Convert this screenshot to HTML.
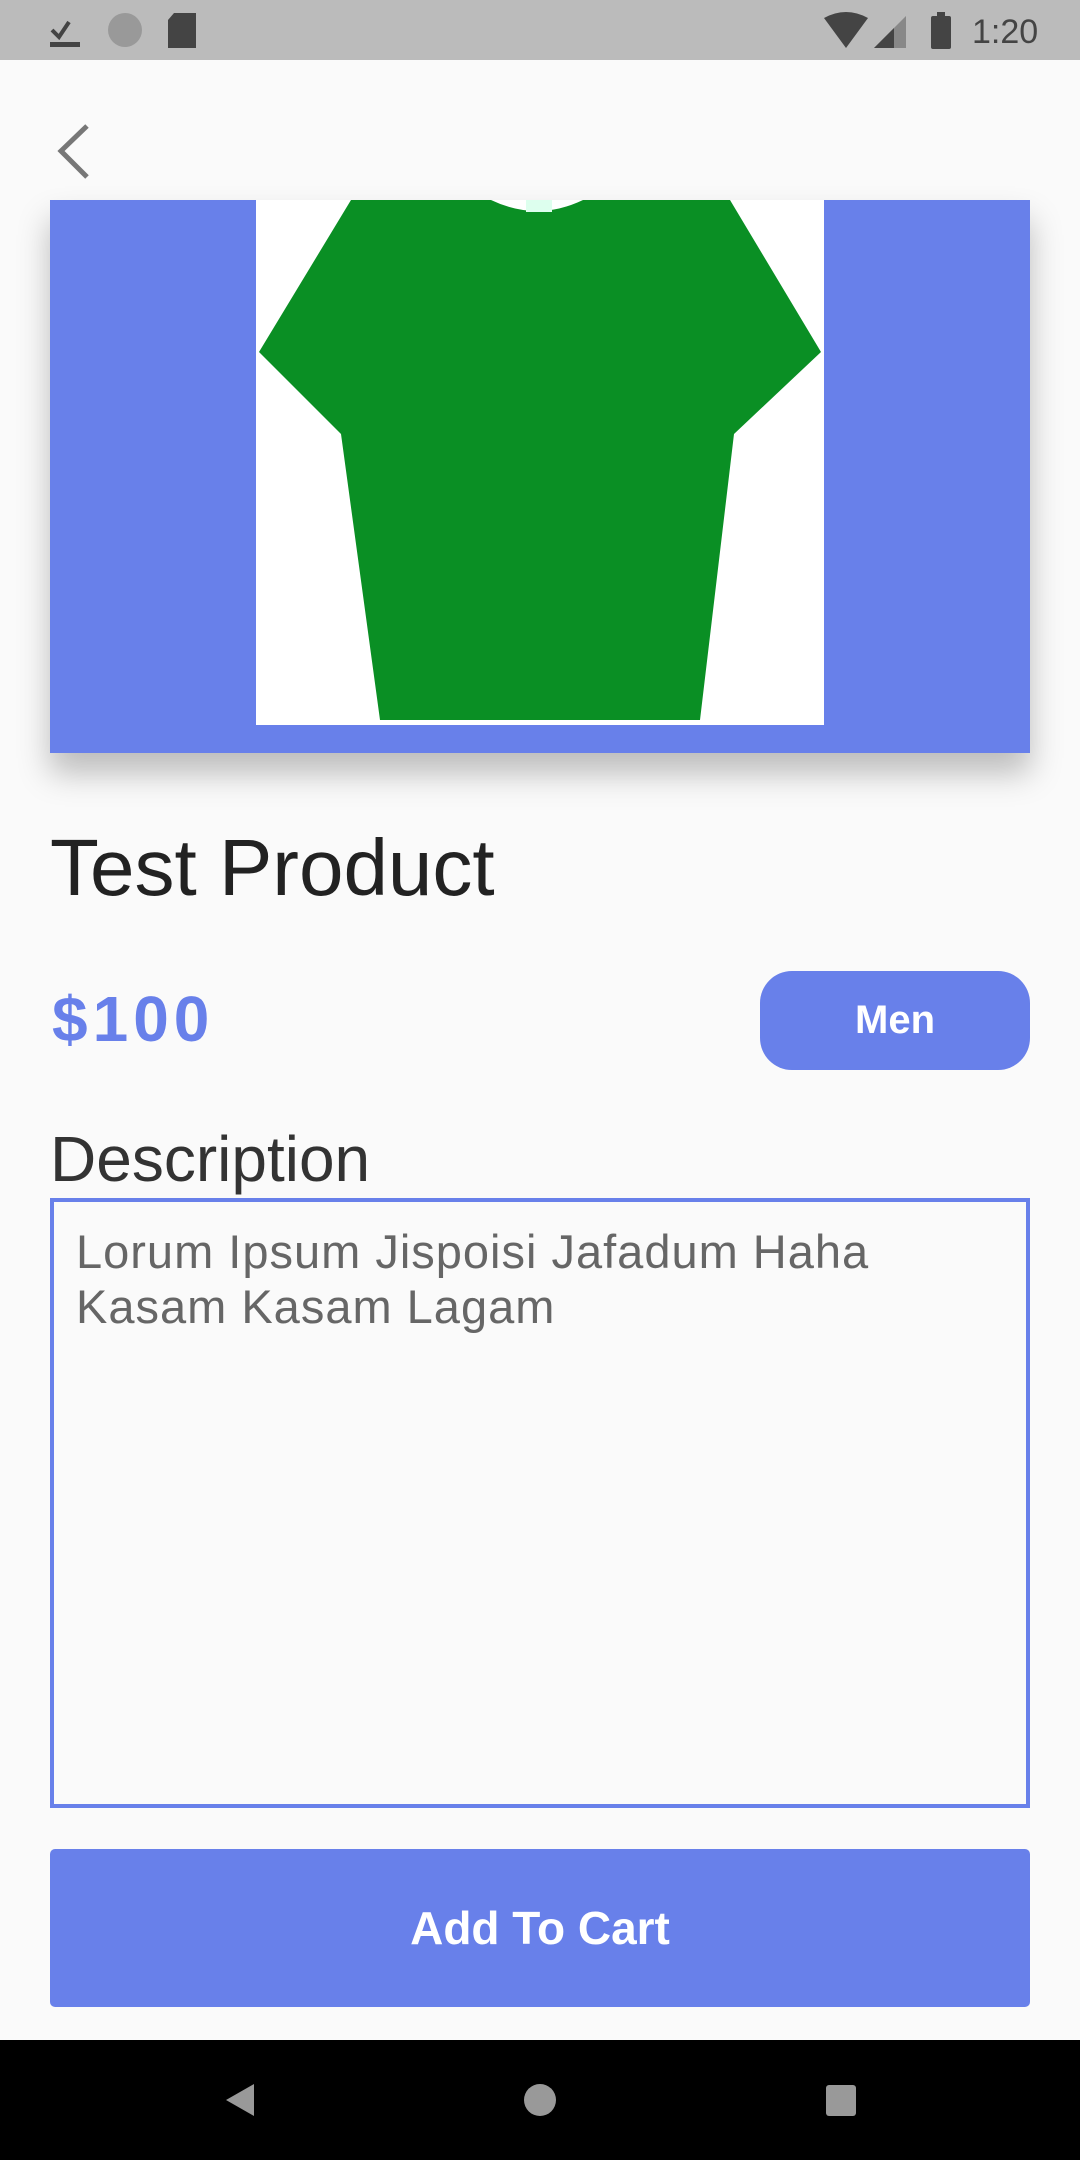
<!DOCTYPE html>
<html><head><meta charset="utf-8"><style>
*{margin:0;padding:0;box-sizing:border-box}
body{width:1080px;height:2160px;background:#fafafa;position:relative;overflow:hidden;font-family:"Liberation Sans",Roboto,sans-serif}
.abs{position:absolute}
</style></head><body>
<div class="abs" style="left:0;top:0;width:1080px;height:60px;background:#bbbbbb"></div>
<svg class="abs" style="left:0;top:0" width="1080" height="60">
<path d="M52 30l7 7 10-15" stroke="#444" stroke-width="4" fill="none"/><rect x="50" y="42" width="30" height="5" fill="#444"/>
<circle cx="125" cy="30" r="17" fill="#999"/>
<path d="M174 13h22v35h-28v-28z" fill="#444"/>
<path d="M824 18q22-12 44 0l-22 30z" fill="#444"/>
<path d="M874 48l32-32v32z" fill="#888"/><path d="M874 48l20-20v20z" fill="#444"/>
<rect x="931" y="16" width="20" height="33" rx="2" fill="#444"/><rect x="937" y="12" width="8" height="5" fill="#444"/>
<text x="972" y="43" font-size="34" fill="#444" font-family="Liberation Sans">1:20</text>
</svg>
<svg class="abs" style="left:0;top:60px" width="120" height="140"><path d="M87 66L61 91l26 26" stroke="#777" stroke-width="5" fill="none"/></svg>
<div class="abs" style="left:50px;top:200px;width:980px;height:553px;background:#6880ea;box-shadow:0 20px 30px rgba(0,0,0,0.25)"></div>
<div class="abs" style="left:256px;top:200px;width:568px;height:525px;background:#fff"></div>
<svg class="abs" style="left:256px;top:200px" width="568" height="525">
<path d="M95 0H235Q281 22 327 0H474L565 152L478 234L444 520H124L85 234L3 152Z" fill="#0a8f24"/>
<rect x="270" y="0" width="26" height="12" fill="#dfe"/>
</svg>
<div class="abs" style="left:50px;top:822px;font-size:80px;color:#222">Test Product</div>
<div class="abs" style="left:52px;top:982px;font-size:64px;font-weight:bold;color:#6880ea;letter-spacing:5px">$100</div>
<div class="abs" style="left:760px;top:971px;width:270px;height:99px;border-radius:32px;background:#6880ea;color:#fff;font-weight:bold;font-size:40px;text-align:center;line-height:99px">Men</div>
<div class="abs" style="left:50px;top:1122px;font-size:64px;color:#333">Description</div>
<div class="abs" style="left:50px;top:1198px;width:980px;height:610px;border:4px solid #6880ea;padding:22px 0 0 22px;font-size:47px;line-height:55px;letter-spacing:1px;color:#666">Lorum Ipsum Jispoisi Jafadum Haha<br>Kasam Kasam Lagam</div>
<div class="abs" style="left:50px;top:1849px;width:980px;height:158px;border-radius:5px;background:#6880ea;color:#fff;font-weight:bold;font-size:46px;text-align:center;line-height:158px">Add To Cart</div>
<div class="abs" style="left:0;top:2040px;width:1080px;height:120px;background:#000"></div>
<svg class="abs" style="left:0;top:2040px" width="1080" height="120">
<path d="M254 44v32l-28-16z" fill="#999"/><circle cx="540" cy="60" r="16" fill="#999"/><rect x="826" y="45" width="30" height="31" rx="3" fill="#999"/>
</svg>
</body></html>
